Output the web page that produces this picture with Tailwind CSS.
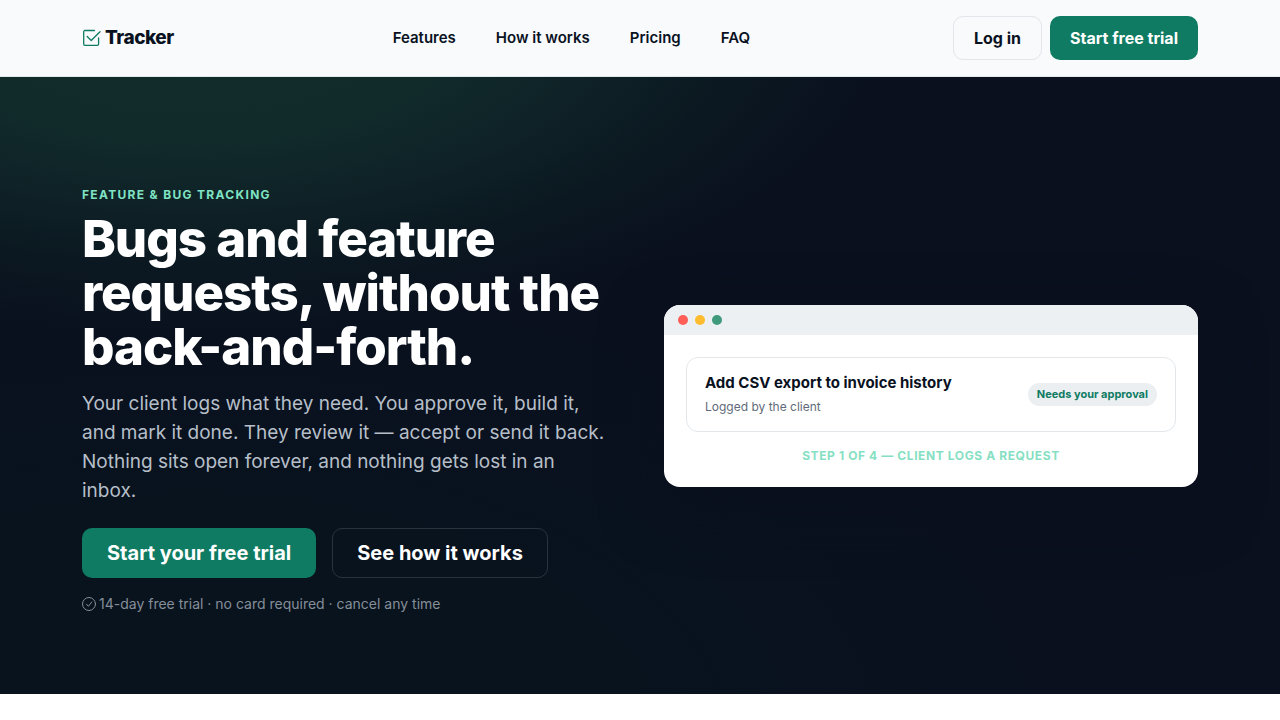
<!DOCTYPE html>
<html lang="en">
<head>
<meta charset="utf-8">
<meta name="viewport" content="width=device-width, initial-scale=1">
<title>Tracker</title>
<script src="https://cdn.jsdelivr.net/npm/@tailwindcss/browser@4"></script>
</head>
<body class="bg-white font-['Inter',sans-serif] text-[#0a121f] antialiased">
<header class="border-b border-[#dfe8ea] bg-[#f8fafc]">
  <div class="mx-auto flex max-w-[1140px] items-center justify-between px-3 py-4">
    <a href="#" class="mr-4 flex items-center gap-[3px] text-[19px] font-extrabold tracking-tight">
      <svg class="size-5 text-[#0f7b63]" viewBox="0 0 20 20" fill="none" stroke="currentColor" stroke-width="1.3" stroke-linecap="round" stroke-linejoin="round" aria-hidden="true">
        <path d="M12.5 2.5H3A1.3 1.3 0 0 0 1.7 3.8V16A1.3 1.3 0 0 0 3 17.3H15.3A1.3 1.3 0 0 0 16.6 16V10"/>
        <path d="M5.2 8.5L9.2 12.5L18 3.8"/>
      </svg>
      Tracker
    </a>
    <nav class="hidden gap-10 text-[15px] font-semibold md:flex">
      <a href="#features">Features</a>
      <a href="#how">How it works</a>
      <a href="#pricing">Pricing</a>
      <a href="#faq">FAQ</a>
    </nav>
    <div class="flex gap-2 font-bold">
      <button class="h-11 rounded-[10px] border border-[#e2e6ea] px-5">Log in</button>
      <button class="h-11 rounded-[10px] bg-[#0f7b63] px-5 text-white">Start free trial</button>
    </div>
  </div>
</header>
<main class="bg-[#0a101e] bg-[radial-gradient(1100px_500px_at_15%_-10%,#112c2c_0%,#112b2b_24%,#0f2227_38%,#0b1821_50%,transparent_64%),radial-gradient(900px_500px_at_15%_110%,#08131e_0%,#08131e_50%,transparent_100%)]">
  <div class="mx-auto grid max-w-[1140px] items-center gap-12 px-3 pt-[101px] pb-20 lg:grid-cols-2">
    <section class="pt-2">
      <p class="text-xs leading-[18px] font-bold tracking-[0.11em] text-[#7fe3c3] uppercase">Feature &amp; bug tracking</p>
      <h1 class="mt-2 text-[51px] leading-[54px] font-extrabold tracking-[-0.02em] text-white">Bugs and feature requests, without the back-and-forth.</h1>
      <p class="mt-[15px] pr-2 text-[19px] leading-[29px] text-[#b6bfc9]">Your client logs what they need. You approve it, build it, and mark it done. They review it — accept or send it back. Nothing sits open forever, and nothing gets lost in an inbox.</p>
      <div class="mt-[23px] flex flex-wrap gap-4 text-xl font-bold text-white">
        <button class="h-[50px] rounded-[10px] bg-[#0f7b63] px-[25px]">Start your free trial</button>
        <button class="h-[50px] rounded-[10px] border border-[#28333e] px-6">See how it works</button>
      </div>
      <p class="mt-[15px] flex items-center gap-[3px] text-sm leading-[21px] text-[#858e99]">
        <svg class="size-3.5" viewBox="0 0 14 14" fill="none" stroke="currentColor" stroke-linecap="round" stroke-linejoin="round" aria-hidden="true">
          <circle cx="7" cy="7" r="6.5"/><path d="M4.5 7.2L6.4 9.3L9.8 5"/>
        </svg>
        14-day free trial · no card required · cancel any time
      </p>
    </section>
    <section class="overflow-hidden rounded-2xl bg-white shadow-[0_20px_60px_#0a101e]">
      <div class="flex items-center gap-[7px] bg-[#edf0f3] px-3.5 py-2.5">
        <span class="size-2.5 rounded-full bg-[#ff5f57]"></span>
        <span class="size-2.5 rounded-full bg-[#febc2e]"></span>
        <span class="size-2.5 rounded-full bg-[#3f9a7b]"></span>
      </div>
      <div class="p-[22px]">
        <div class="flex items-center justify-between gap-4 rounded-xl border border-[#e3e7ea] px-[18px] py-3.5">
          <div>
            <h2 class="text-[15px] leading-[22px] font-bold">Add CSV export to invoice history</h2>
            <p class="mt-0.5 text-xs leading-[21px] text-[#5f6b7a]">Logged by the client</p>
          </div>
          <span class="rounded-full bg-[#ebeff2] px-[9px] py-1 text-[11px] leading-[15px] font-bold text-[#0f7b63]">Needs your approval</span>
        </div>
        <p class="mt-[15px] text-center text-xs leading-[18px] font-bold tracking-wider text-[#86dfc3] uppercase">Step 1 of 4 — client logs a request</p>
      </div>
    </section>
  </div>
</main>
</body>
</html>
